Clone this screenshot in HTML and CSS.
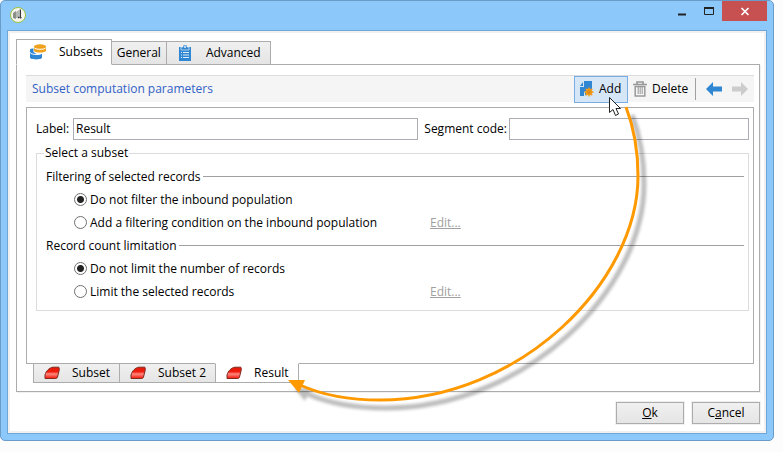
FILE: index.html
```html
<!DOCTYPE html>
<html lang="en">
<head>
<meta charset="utf-8">
<title>Subsets</title>
<link rel="stylesheet" href="styles.css">
</head>
<body>
<svg class="defs" width="0" height="0" aria-hidden="true">
  <defs>
    <linearGradient id="red" x1="0" y1="0" x2="0" y2="1">
      <stop offset="0" stop-color="#e21a0c"/><stop offset=".4" stop-color="#f01c0c"/><stop offset=".6" stop-color="#ff8a80"/><stop offset="1" stop-color="#f51505"/>
    </linearGradient>
    <symbol id="segment" viewBox="0 0 16 14">
      <path d="M1 12.500V9C2 5 5.500 1.500 9 1.200H14.500C15.500 1.200 15.500 3 15 5L13.500 11C13.200 12 12.500 12.500 11.500 12.500Z" fill="url(#red)" stroke="#7d2a20"/>
    </symbol>
  </defs>
</svg>
<main class="window">
  <header class="titlebar">
    <svg class="logo" viewBox="0 0 16 16" width="16" height="16">
      <circle cx="8" cy="8" r="7.500" fill="#f4f6ee" stroke="#9cc13c"/>
      <path d="M3 6l3-2v8l-3-1z" fill="#8a8f88"/><path d="M6 5l3-2v8H6z" fill="#b5b8b2"/>
      <path d="M10.300 2.500v8.500" fill="none" stroke="#222" stroke-width="1.200"/><path d="M9.500 10.500H8" stroke="#333" stroke-width="1.500"/><path d="M10 11.500l2-1" stroke="#777"/>
    </svg>
    <div class="window-controls">
      <button class="control" aria-label="Minimize"><svg viewBox="0 0 12 12" width="12" height="12"><path d="M2 9.500h8" stroke="#222" stroke-width="2"/></svg></button>
      <button class="control" aria-label="Maximize"><svg viewBox="0 0 12 12" width="12" height="12"><path d="M1.500 3v6.500h9V3" fill="none" stroke="#222"/><path d="M1 3h10" stroke="#222" stroke-width="2"/></svg></button>
      <button class="control close" aria-label="Close"><svg viewBox="0 0 12 12" width="12" height="12"><path d="M2.500 3l7 7M9.500 3l-7 7" stroke="#fff" stroke-width="1.700"/></svg></button>
    </div>
  </header>

  <div class="client">
    <nav class="tabs">
      <button class="tab active">
        <svg viewBox="0 0 18 18" width="18" height="18">
          <path d="M1 7v7.500c0 2.500 12 2.500 12 0V11H7.500L4.500 9V5.500C2 5.500 1 6 1 7z" fill="#2f86d2"/>
          <path d="M1 9.500c1 1.600 4 2 7 2s4.500-.5 5-1.500" fill="none" stroke="#fff"/>
          <path d="M5 3.500v4c0 2.700 12 2.700 12 0v-4z" fill="#f0a11d"/><ellipse cx="11" cy="3.500" rx="6" ry="2.200" fill="#f0a11d"/>
          <path d="M5 4.500c1 2.400 11 2.400 12 0" fill="none" stroke="#fff"/>
        </svg>
        <span>Subsets</span>
      </button>
      <button class="tab plain"><span>General</span></button>
      <button class="tab">
        <svg viewBox="0 0 18 18" width="18" height="18">
          <path d="M3 3h12v14H3z" fill="#2f86d2"/><path d="M7 1h4v2h2v3H5V3h2z" fill="#2f86d2" stroke="#e8eef4" stroke-width=".7"/><circle cx="9" cy="3" r="1" fill="#e8eef4"/>
          <path d="M5 8.500h1M7 8.500h6M5 11h1M7 11h6M5 13.500h1M7 13.500h6" stroke="#dcebf8"/>
        </svg>
        <span>Advanced</span>
      </button>
    </nav>

    <section class="page">
      <div class="toolbar">
        <h1>Subset computation parameters</h1>
        <button class="tool add">
          <svg viewBox="0 0 16 16" width="16" height="16">
            <path d="M5 0h8v9H9l-3 6H1V6h4z" fill="#2f86d2"/><path d="M1 5h3V1z" fill="#2f86d2"/>
            <path d="M5.500 15.500V11H8" fill="none" stroke="#d5e6f7"/>
            <circle cx="10" cy="11" r="3.300" fill="#f19a1b"/>
            <path d="M10 6.500v9M5.500 11h9M6.800 7.800l6.400 6.400M13.200 7.800l-6.400 6.400" stroke="#f19a1b" stroke-width="1.500"/>
            <circle cx="10" cy="11" r="1.800" fill="#d98a17"/>
          </svg>
          <span>Add</span>
        </button>
        <button class="tool delete">
          <svg viewBox="0 0 16 16" width="16" height="16"><path d="M1 3.500h14M5 3V1h6v2" fill="none" stroke="#999" stroke-width="1.700"/><path d="M3.200 5.500V15h9.600V5.500z" fill="none" stroke="#999" stroke-width="1.500"/><path d="M6.200 6v7M8.200 6v7M10.200 6v7" stroke="#999"/></svg>
          <span>Delete</span>
        </button>
        <span class="divider"></span>
        <button class="tool arrow" aria-label="Move left"><svg viewBox="0 0 16 14" width="16" height="14"><path d="M0 7l7-7v4.500h9v5H7V14z" fill="#2f86d2"/></svg></button>
        <button class="tool arrow" aria-label="Move right" disabled><svg viewBox="0 0 16 14" width="16" height="14"><path d="M16 7L9 0v4.500H0v5h9V14z" fill="#ccc"/></svg></button>
      </div>

      <form class="panel">
        <div class="fields">
          <label for="label">Label:</label>
          <input class="box" id="label" type="text" value="Result">
          <label for="code">Segment code:</label>
          <input class="box code" id="code" type="text">
        </div>
        <fieldset>
          <legend>Select a subset</legend>
          <h2>Filtering of selected records</h2>
          <div class="option">
            <label><input type="radio" name="filter" checked>Do not filter the inbound population</label>
          </div>
          <div class="option">
            <label><input type="radio" name="filter">Add a filtering condition on the inbound population</label>
            <a href="#filter">Edit...</a>
          </div>
          <h2>Record count limitation</h2>
          <div class="option">
            <label><input type="radio" name="limit" checked>Do not limit the number of records</label>
          </div>
          <div class="option">
            <label><input type="radio" name="limit">Limit the selected records</label>
            <a href="#limit">Edit...</a>
          </div>
        </fieldset>
      </form>

      <nav class="subtabs">
        <button class="subtab"><svg width="16" height="14"><use href="#segment"/></svg><span>Subset</span></button>
        <button class="subtab"><svg width="16" height="14"><use href="#segment"/></svg><span>Subset 2</span></button>
        <button class="subtab active"><svg width="16" height="14"><use href="#segment"/></svg><span>Result</span></button>
      </nav>
    </section>

    <footer class="actions">
      <button class="push"><u>O</u>k</button>
      <button class="push">C<u>a</u>ncel</button>
    </footer>
  </div>

  <svg class="callout" viewBox="0 0 783 452" width="783" height="452" aria-hidden="true">
    <defs><filter id="soft" x="-10%" y="-10%" width="120%" height="120%"><feGaussianBlur stdDeviation="1.500"/></filter></defs>
    <g transform="translate(6 8)" filter="url(#soft)" opacity=".26">
      <path d="M626 107C634 128 638 152 638 176C638 282 520 400 380 400C346 400 322 395 302 386" fill="none" stroke="#000" stroke-width="5"/>
      <path d="M288 380l17 0-6 13z" fill="#000"/>
    </g>
    <path d="M626 107C634 128 638 152 638 176C638 282 520 400 380 400C346 400 322 395 300 385" fill="none" stroke="#f90" stroke-width="3"/>
    <path d="M288 380l17 0-6 13z" fill="#f90"/>
    <path d="M609.500 97.500v15l3.500-3 2.500 6 3-1.500-2.500-5.500h4.500z" fill="#fff" stroke="#222"/>
  </svg>
</main>
</body>
</html>
```

FILE: styles.css
```css
* { box-sizing: border-box; }

body {
  margin: 0;
  height: 100vh;
  padding: 0 9px 11px 0;
  background: #fcfcfc;
  color: #000;
  font: 12px/16px "Open Sans", "Noto Sans", sans-serif;
}

button, input { font: inherit; color: inherit; }
button { margin: 0; padding: 0; border: 0; background: none; }
svg { display: block; flex: none; }
.defs { position: absolute; }

.window {
  position: relative;
  display: flex;
  flex-direction: column;
  min-height: 100%;
  padding: 0 6px 6px;
  border: 1px solid #6a9cc9;
  border-radius: 5px;
  background: #8dc8fb;
}

.titlebar {
  display: flex;
  justify-content: space-between;
  height: 29px;
}
.logo { margin: 6px 0 0 3px; }
.window-controls { display: flex; height: 20px; }
.control {
  display: grid;
  place-items: center;
  width: 27px;
}
.control.close { width: 45px; background: #c75050; }

.client {
  flex: 1;
  display: flex;
  flex-direction: column;
  padding: 8px 6px 6px 7px;
  border: 1px solid #6fa6d9;
  background: #fff;
  box-shadow: inset 0 0 0 2px #f0f0f0;
}

.tabs {
  display: flex;
  align-items: flex-end;
  margin: 0 0 -1px 2px;
}
.tab {
  display: flex;
  align-items: center;
  gap: 12px;
  height: 24px;
  margin-left: -1px;
  padding: 0 9px;
  border: 1px solid #acacac;
  background: linear-gradient(#f0f0f0, #e5e5e5);
}
.tab.plain { padding: 0 5px; }
.tab.active {
  position: relative;
  height: 26px;
  padding: 0 8px 0 12px;
  border-bottom-color: #fff;
  background: #fff;
}

.page {
  flex: 1;
  display: flex;
  flex-direction: column;
  margin: 0 0 0 1px;
  padding: 10px 5px 8px 9px;
  border: 1px solid #acacac;
  box-shadow: 1px 1px 0 #f0f0f0;
}

.toolbar {
  display: flex;
  align-items: center;
  height: 27px;
  margin-bottom: 5px;
  padding: 0 6px;
  border-top: 1px solid #dcdcdc;
  background: #f5f5f5;
}
h1 {
  flex: 1;
  margin: 0;
  color: #3161c5;
  font-size: 12px;
  font-weight: 400;
}
.tool {
  display: flex;
  align-items: center;
  gap: 4px;
  height: 27px;
}
.add {
  width: 54px;
  padding-left: 4px;
  border: 1px solid #78aee5;
  background: #d5e6f7;
}
.delete { width: 63px; margin-left: 4px; }
.divider { width: 1px; height: 22px; margin: 0 10px 0 0; background: #a0a0a0; }
.arrow + .arrow { margin-left: 10px; }

.panel {
  flex: 1;
  padding: 10px 4px 8px 9px;
  border: 1px solid #acacac;
}
.fields { display: flex; align-items: center; }
.box {
  flex: 347 1 0;
  min-width: 0;
  height: 22px;
  padding: 0 2px 2px;
  border: 1px solid #abadb3;
  border-radius: 0;
  background: #fff;
}
.box.code { flex-grow: 239; }
.fields label[for="label"] { width: 37px; white-space: nowrap; }
.fields label[for="code"] { width: 91px; padding-left: 6px; white-space: nowrap; }

fieldset {
  min-width: 0;
  margin: 5px 0 0;
  padding: 4px 4px 7px 9px;
  border: 1px solid #dcdcdc;
}
legend { margin-left: -2px; padding: 0 1px; }
h2 {
  display: flex;
  align-items: center;
  gap: 2px;
  height: 23px;
  margin: 0;
  font-size: 12px;
  font-weight: 400;
}
h2::after { content: ""; flex: 1; height: 1px; background: #a0a0a0; }
.option {
  display: grid;
  grid-template-columns: 356px auto;
  justify-content: start;
  align-items: center;
  height: 23px;
  padding-left: 28px;
}
.option label { display: flex; align-items: center; gap: 3px; white-space: nowrap; }
.option a { color: #a0a0a0; }
input[type="radio"] {
  appearance: none;
  width: 13px;
  height: 13px;
  margin: 0;
  border: 1px solid #707070;
  border-radius: 50%;
  background: #fff;
}
input[type="radio"]:checked { background: radial-gradient(circle, #222 3px, #fff 4px); }

.subtabs {
  display: flex;
  align-items: flex-start;
  margin: -1px 0 0 7px;
}
.subtab {
  display: flex;
  align-items: center;
  gap: 12px;
  height: 20px;
  margin-right: -1px;
  padding: 0 9px 0 10px;
  border: 1px solid #acacac;
  background: linear-gradient(#f0f0f0, #e5e5e5);
}
.subtab.active {
  position: relative;
  border-top-color: #fff;
  background: #fff;
}

.actions {
  display: flex;
  justify-content: flex-end;
  gap: 8px;
  padding: 10px 0 3px;
}
.push {
  width: 68px;
  height: 22px;
  border: 1px solid #acacac;
  background: linear-gradient(#f0f0f0, #e5e5e5);
  box-shadow: 0 0 0 1px #f0f0f0;
}

.callout {
  position: absolute;
  top: -1px;
  left: -1px;
  pointer-events: none;
}
```
